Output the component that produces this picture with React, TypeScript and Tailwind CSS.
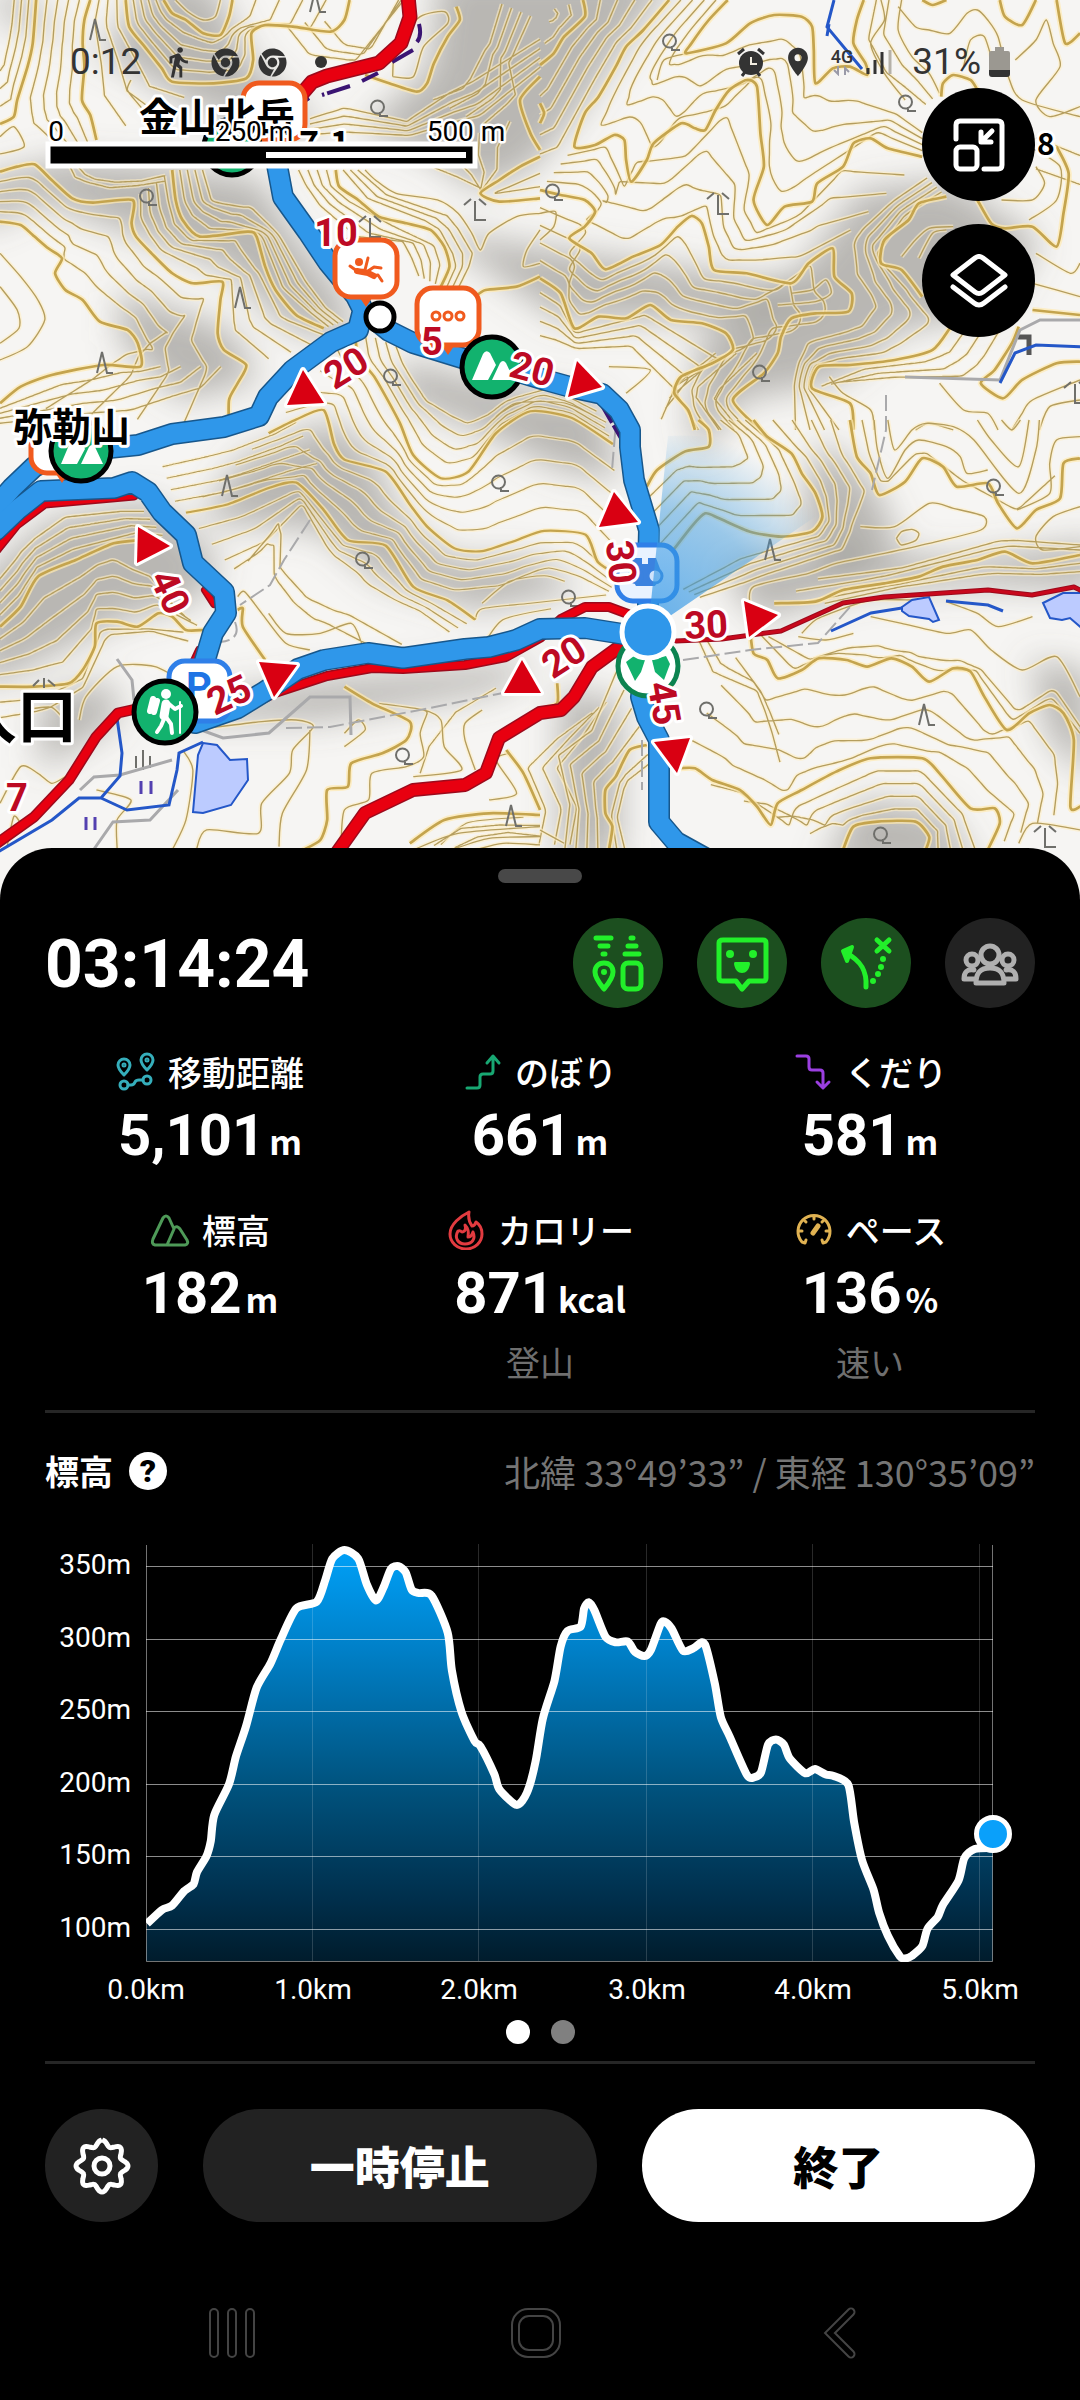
import type { ReactNode } from 'react';
import { FaChrome } from 'react-icons/fa';
import { MdDirectionsWalk, MdLocationOn } from 'react-icons/md';

type Point = [number, number];

const JP = 'font-["Noto_Sans_CJK_JP",sans-serif]';
const ROBOTO = 'font-[Roboto,"Noto_Sans_CJK_JP",sans-serif]';

// ── Geometry helpers ──

function parse(s: string): Point[] {
    return s.trim().split(/\s+/).map(p => p.split(',').map(Number) as Point);
}

function smooth(pts: Point[], k = 6): string {
    let d = `M${pts[0][0]} ${pts[0][1]}`;
    for (let i = 0; i < pts.length - 1; i++) {
        const a = pts[Math.max(i - 1, 0)];
        const b = pts[i];
        const c = pts[i + 1];
        const e = pts[Math.min(i + 2, pts.length - 1)];
        d += `C${(b[0] + (c[0] - a[0]) / k).toFixed(1)} ${(b[1] + (c[1] - a[1]) / k).toFixed(1)} ${(c[0] - (e[0] - b[0]) / k).toFixed(1)} ${(c[1] - (e[1] - b[1]) / k).toFixed(1)} ${c[0].toFixed(1)} ${c[1].toFixed(1)}`;
    }
    return d;
}

function resample(pts: Point[], n: number): Point[] {
    const dist = [0];
    for (let i = 1; i < pts.length; i++) {
        dist.push(dist[i - 1] + Math.hypot(pts[i][0] - pts[i - 1][0], pts[i][1] - pts[i - 1][1]));
    }
    const total = dist[dist.length - 1];
    const out: Point[] = [];
    let j = 1;
    for (let i = 0; i <= n; i++) {
        const t = (total * i) / n;
        while (j < pts.length - 1 && dist[j] < t) j++;
        const f = (t - dist[j - 1]) / (dist[j] - dist[j - 1] || 1);
        out.push([
            pts[j - 1][0] + (pts[j][0] - pts[j - 1][0]) * f,
            pts[j - 1][1] + (pts[j][1] - pts[j - 1][1]) * f,
        ]);
    }
    return out;
}

// Intermediate contours between two index contours
function between(a: string, b: string, count: number): string[] {
    const p = resample(parse(a), 44);
    const q = resample(parse(b), 44);
    return Array.from({ length: count }, (_, i) => {
        const f = (i + 1) / (count + 1);
        return smooth(p.map((pt, k) => [pt[0] + (q[k][0] - pt[0]) * f, pt[1] + (q[k][1] - pt[1]) * f] as Point));
    });
}

// ── Map data ──

type Tile = { transform: string; major: string[]; minor: string[]; bands: [string, string, number][] };

const TILES: Tile[] = [
    {
        transform: 'scale(.3444 .3333)',
        major: [
            '105,0 95,130 80,200 50,300 40,350 0,372',
            '262,0 245,60 240,130 245,200 238,300 262,345 280,420',
            '365,0 375,80 420,140 470,205 500,245 620,250 715,235 735,180 730,100 770,75 850,80 960,95 1000,60 1015,0',
            '475,0 500,40 540,60 590,100 640,105 665,50 675,0',
            '1325,20 1335,60 1300,110 1260,190 1240,250 1210,275 1130,250 1060,225',
            '0,515 50,500 100,493 150,540 210,595 270,608 385,600 382,670 395,710 440,760 500,820 560,850 645,845 640,900 632,1000 650,1050 715,1095 690,1150 665,1200 665,1290',
            '500,510 510,600 530,660 580,710 720,695 745,710 770,800 800,870 860,945 940,985',
            '0,665 60,675 95,705 140,745 180,775 160,820 190,870 240,900 290,965 370,990 400,1030 408,1100 300,1095 150,1125 60,1160 0,1210',
            '975,510 985,560 1040,600 1100,650 1180,670 1250,690 1290,740 1305,800 1280,860',
            '1568,470 1510,500 1450,540 1395,580 1450,605 1568,595',
            '1568,830 1500,860 1410,870 1380,890',
            '1568,230 1510,300 1540,400 1568,450',
        ],
        minor: [
            '0,410 40,380 70,440 0,462', '380,240 370,270 400,310 450,370', '510,0 545,35 590,60 625,50 640,0',
            '0,760 60,830 110,900 130,960 80,1040 0,1080', '0,860 50,930 55,985 0,1030',
            '1568,640 1500,650 1420,700 1395,750 1370,700 1330,640 1270,600 1150,580 1090,540 1060,510',
            '1568,690 1530,750 1520,800 1568,790',
            '1568,520 1480,560 1440,580 1568,560',
            '1140,230 1150,130 1220,50 1290,35 1300,70 1230,140 1200,230 1140,230',
        ],
        bands: [
            ['20,0 10,100 0,160', '105,0 95,130 80,200 50,300 40,350 0,372', 3],
            ['105,0 95,130 80,200 50,300 60,380 150,450', '262,0 245,60 240,130 245,200 238,300 262,345 280,420', 4],
            ['262,0 245,60 245,200 238,300 280,420', '365,0 375,80 420,140 500,245 620,250', 3],
            ['365,0 375,80 420,140 500,245 620,250 715,235 735,180 730,100 770,75 850,80 960,95 1015,0', '475,0 500,40 540,60 590,100 640,105 665,50 675,0', 4],
            ['1000,60 1050,120 1100,130 1150,0', '770,75 850,180 1010,200 1180,0', 3],
            ['900,340 1000,300 1180,350 1300,250 1568,90', '900,420 1200,420 1400,380 1568,230', 4],
            ['1210,275 1300,250 1400,120 1430,0', '1450,400 1540,300 1500,200 1568,60', 4],
            ['0,515 50,500 100,493 150,540 210,595 385,600 382,670 440,760 560,850 645,845 632,1000 715,1095 665,1290', '0,665 60,675 140,745 180,775 160,820 240,900 370,990 408,1100 300,1095 0,1210', 4],
            ['385,600 382,670 440,760 560,850 645,845 632,1000 715,1095', '500,510 530,660 580,710 720,695 770,800 860,945 1040,1000', 4],
            ['500,510 510,600 530,660 580,710 720,695 745,710 800,870 940,985', '610,510 640,600 760,600 860,760 960,920 1010,960', 4],
            ['180,500 190,540 300,580 480,560', '250,500 300,530 420,530 480,510', 2],
            ['975,510 985,560 1040,600 1180,670 1290,740 1305,800 1280,860', '840,510 900,620 1000,720 1140,720 1200,820', 4],
            ['1060,510 1150,580 1330,640 1400,760 1350,860', '975,510 1040,600 1250,690 1305,800 1280,860', 3],
            ['1130,500 1200,530 1290,540 1395,560', '1568,330 1500,420 1480,500 1395,580', 4],
            ['408,1100 300,1095 150,1125 0,1210', '700,1100 640,1180 420,1260 0,1285', 4],
        ],
    },
    {
        transform: 'translate(540 0) scale(.3444 .3333)',
        major: [
            '125,0 130,50 70,110 40,160 0,195',
            '375,0 300,90 250,140 220,200 170,290 130,340 100,440 160,435 215,405 245,420 250,480 265,545 310,480 330,430 410,370 450,385 480,390 510,330 550,270 600,240 630,260 640,400 650,500 620,600 660,675 710,620 790,605 805,550 880,500 910,430 960,415 1010,445 1110,470',
            '545,0 490,60 440,130 425,160 540,130 610,70 680,45 760,50 790,80 795,150 800,250 850,205 900,200 950,225 945,190 910,130 920,60 940,0',
            '0,570 60,585 130,600 160,635 130,680 85,715 150,760 190,808 270,770 350,735 400,680 440,648 470,670 490,740 505,810 600,820 730,850 780,790 850,745 855,830 905,880 895,935 800,940 730,955 700,1010 690,1060 650,1120 560,1200 640,1290',
            '0,835 60,880 100,985 170,950 250,955 320,915 380,960 470,970 540,1000 560,1050 500,1090 410,1130 390,1180 430,1230 450,1290',
            '1335,0 1350,50 1400,75 1440,0', '1500,0 1525,130 1568,100',
            '1165,290 1170,250 1200,225 1250,240 1270,270',
            '1180,590 1100,610 1070,660 1000,720 990,790 1050,810 1110,890',
            '1270,600 1310,670 1350,685 1430,680 1500,740 1520,640 1535,520 1500,440',
            '1430,930 1568,945',
            '1390,980 1370,1030 1320,1110 1280,1150 1345,1195 1400,1140 1500,1090 1568,1085',
            '1190,985 1140,1050 1030,1080 900,1095 810,1100 790,1165 900,1210 910,1290',
            '1110,0 1140,15 1180,0', '0,310 12,340 0,370',
        ],
        minor: [
            '990,0 1000,60 960,130 1000,220 1060,300', '1050,0 1040,90 1080,170 1130,220 1160,280',
            '1040,20 1090,80 1130,90 1190,100 1240,40 1270,30 1300,60 1330,110 1360,230 1400,300 1568,350',
            '1380,180 1440,120 1470,60 1490,130 1510,200 1440,300 1480,350 1568,320', '1230,200 1250,120 1290,110 1320,210',
            '840,1130 880,1180 960,1230 970,1290', '1160,1150 1230,1230 1300,1240 1330,1290', '1450,1290 1480,1220 1568,1200',
            '1370,1290 1400,1240 1430,1200 1568,1140', '730,880 790,870 830,840 845,880 800,905 690,915',
            '1050,770 1090,720 1130,685 1200,680', '1100,775 1140,700 1180,690', '1440,500 1465,550 1430,600 1340,600',
            '0,640 45,635 40,680 0,720', '340,240 360,180 430,160', '250,1180 320,1110 200,1100',
            '1420,440 1510,500 1500,600 1420,660', '1440,760 1540,820 1568,790', '1430,850 1568,890', '1090,1290 1130,1270 1200,1290',
        ],
        bands: [
            ['0,40 30,30 40,0', '125,0 130,50 70,110 40,160 0,195', 2],
            ['125,0 130,50 70,110 0,230', '375,0 300,90 250,140 170,290 60,500 0,520', 4],
            ['545,0 440,130 425,160 610,70 760,50 795,150 800,250 850,205 950,225 1110,380', '375,0 250,140 100,440 215,405 265,545 330,430 480,390 600,240 640,400 620,600 660,675 805,550 960,415 1110,470', 4],
            ['100,440 215,405 265,545 330,430 480,390 600,240 650,500 620,600 660,675 790,605 910,430 1110,470', '0,570 130,600 160,635 85,715 190,808 350,735 440,648 505,810 730,850 850,745', 4],
            ['0,570 160,635 85,715 190,808 350,735 440,648 505,810 600,820 730,850 850,745 855,830 905,880 895,935 730,955 690,1060 560,1200 640,1290', '0,835 60,880 100,985 170,950 320,915 380,960 540,1000 560,1050 410,1130 390,1180 450,1290', 4],
            ['1110,520 1000,600 880,700 870,800 930,900 900,960 750,1010 700,1290', '1180,590 1070,660 990,790 1110,890 1190,985 1030,1080 810,1100 790,1165 910,1290', 4],
            ['0,835 60,880 100,985 320,915 560,1050 400,1130', '0,1050 90,1060 250,1070 350,1200 340,1290', 4],
            ['940,0 910,130 960,240 1100,330', '1050,0 1040,90 1130,220 1160,280', 2],
            ['1190,985 1140,1050 900,1095 790,1165', '1390,980 1320,1110 1280,1150 900,1140', 3],
            ['690,1060 560,1200 640,1290', '450,1060 330,1150 400,1290', 3],
            ['1440,320 1568,380', '1440,600 1568,640', 2],
        ],
    },
    {
        // central basin between the two ridges
        transform: 'scale(.6888 .5484)',
        major: [
            '515,600 520,650 545,690 580,770 600,830 640,872 680,860 720,790 770,750 830,762 890,810',
            '390,790 430,765 470,748 485,810 500,838 560,860 595,920 620,960 660,1000 700,1005 750,985 790,968 850,975 868,1025 900,1050',
            '270,935 330,920 390,890 430,880 470,930 505,985 560,995 600,1070 650,1095 690,1130',
        ],
        minor: [
            '720,760 750,735 820,735 880,770', '690,1130 700,1110 770,1100 880,1085', '820,1060 790,1050 740,1060 700,1100',
            '700,1180 730,1130 800,1110', '640,1540 680,1500 760,1490',
        ],
        bands: [
            ['590,640 610,690 630,725 690,750 740,712 800,700 860,735', '515,600 520,650 545,690 580,770 600,830 640,872 680,860 720,790 770,750 830,762 890,810', 4],
            ['515,600 520,650 545,690 580,770 600,830 640,872 680,860 720,790 770,750 830,762 890,810', '390,790 430,765 470,748 485,810 500,838 560,860 595,920 620,960 660,1000 700,1005 750,985 790,968 850,975 900,1050', 4],
            ['390,790 470,748 485,810 500,838 560,860 620,960 660,1000 700,1005 790,968 850,975 900,1050', '270,935 330,920 430,880 505,985 560,995 600,1070 650,1095 720,1090 780,1050 830,1060 880,1085', 4],
            ['230,830 330,800 390,770 420,745', '260,935 330,920 430,880 470,870', 4],
            ['345,1050 400,1010 440,930 470,1010 520,1080 600,1120 640,1160', '270,935 330,920 430,880 505,985 560,995 600,1070 690,1130', 3],
            ['560,1400 570,1350 620,1300 680,1250', '660,1420 700,1300 760,1260', 1],
            ['890,1270 865,1340 830,1400 860,1470 850,1540', '850,1310 790,1350 745,1400 770,1480 760,1540', 3],
        ],
    },
    {
        transform: 'translate(0 420) scale(.3444 .3333)',
        major: [
            '0,620 60,560 110,470 220,420 330,370 410,360',
            '0,800 100,800 200,790 240,750 275,680 280,610 340,605 400,620 460,580 500,590 540,630 590,630',
            '690,570 705,565 705,620 770,720',
            '1000,800 1080,850 1190,905 1180,960 1110,1000 1020,1030 1010,1100 950,1110 950,1200 930,1260 880,1290',
            '1470,990 1520,1060 1568,1170', '1190,1270 1290,1200 1420,1180 1568,1185',
        ],
        minor: [
            '230,900 250,830 340,740 450,740 540,790', '530,990 560,1050 540,1200 500,1290',
            '600,925 760,905 860,900 910,920 850,990 840,1060 760,1150 750,1240 600,1230 570,1290',
            '1230,870 1240,880 1220,940 1230,1010 1180,1040 1080,1060 1070,1140 1000,1170 990,1290',
            '1400,870 1350,910 1350,960 1380,1050', '780,580 830,640 930,640 1020,610 1050,670',
            '690,530 710,515 760,580 830,670 900,690', '0,1150 60,1040 110,1060 150,1090 190,1070',
            '900,930 890,1050 820,1180 810,1280', '1000,940 1040,900 1060,930 1000,980', '100,865 150,862 180,890', '100,940 150,930',
            '20,1284 40,1190 60,1210', '340,1284 340,1200 380,1140 280,1110', '1480,1000 1440,1020 1500,1120 1420,1140', '1200,1290 1330,1240 1568,1220', '1310,1290 1420,1255 1568,1250', '1380,1290 1460,1270 1568,1275',
            '1100,850 1230,870 1280,900 1290,980 1340,1050 1200,1070', '550,830 700,840 880,800',
        ],
        bands: [
            ['0,440 60,360 180,260 400,250', '0,620 60,560 110,470 220,420 410,360 490,370', 4],
            ['0,620 60,560 110,470 220,420 330,370 430,440 500,560', '0,800 100,800 200,790 275,680 280,610 400,620 460,580 590,630', 4],
            ['0,800 100,800 240,750 280,610 400,620 520,610', '0,940 150,900 240,830 330,660 450,640 560,690', 2],
            ['640,470 720,450 775,410 780,500 850,620 1000,690', '760,400 840,250 830,420 930,520 1080,560 1250,665', 2],
            ['1380,1290 1500,1260 1568,1280', '1200,1270 1290,1200 1568,1185', 2],
        ],
    },
    {
        transform: 'translate(540 420) scale(.3444 .3333)',
        major: [
            '310,200 340,150 420,95 490,80 490,30 460,0',
            '620,0 660,50 730,100 760,160 800,220 820,290 790,335 700,350 610,335 520,295 480,280 440,320 350,440',
            '680,550 800,545 880,510 1000,490 1100,470 1170,440 1270,420 1350,395 1430,430 1568,405',
            '900,0 920,110 960,160 985,225 1060,185 1110,115 1170,140 1210,200 1300,190 1330,250 1385,325 1440,270 1510,235 1520,130 1568,115',
            '610,630 620,700 660,720 690,775 760,750 810,715 890,720 950,740 1020,715 1080,740 1130,785 1200,745 1250,755 1290,830 1355,930 1420,880 1480,855 1520,880 1550,960 1540,1160 1568,1160',
            '310,975 260,990 220,1070 190,1110 190,1180 210,1220 200,1290',
            '400,1045 450,1045 500,1080 580,1110 630,1160 670,1215 690,1150 760,1110 860,1055 960,1015 1110,1015 1160,1060 1250,1165 1320,1165 1335,1210 1300,1290',
            '880,1290 910,1220 980,1205 1090,1205 1130,1250 1120,1290', '50,790 50,850 0,870',
        ],
        minor: [
            '930,320 1030,320 1130,250 1200,265 1290,290 1280,330 1130,370 1000,400 860,430 780,460 620,500 610,560',
            '970,0 980,90 1010,175 1060,90 1100,60 1180,80 1220,110 1240,160 1300,150', '1010,0 1030,90 1080,30 1120,10 1200,20 1260,60 1390,220 1440,90 1450,0',
            '1340,0 1370,30 1395,0', '1270,0 1310,60 1390,140 1420,0', '1568,260 1490,290 1440,350 1460,390 1568,380', '1568,50 1500,60 1480,130 1480,220 1385,270',
            '1035,355 1050,335 1080,328 1100,340 1090,362 1050,375 1035,355',
            '760,640 800,600 870,570 960,540 1080,540', '1180,545 1270,580 1330,620 1430,590', '750,650 830,660 910,640',
            '960,590 1050,610 1180,640 1250,630 1310,690 1400,750 1500,710 1568,830', '1390,1270 1430,1210 1568,1230', '0,1230 70,1270',
        ],
        bands: [
            ['310,180 400,95 560,90 540,30 500,0', '340,440 480,280 610,335 790,335 820,290 730,100 620,0', 4],
            ['620,0 730,100 800,220 820,290 790,335 560,400 400,500', '900,0 920,110 985,225 930,320 900,400 620,500 480,540', 4],
            ['610,630 690,775 810,715 950,740 1020,715 1130,785 1250,755 1355,930 1480,855 1550,960 1540,1160', '400,1045 500,1080 670,1215 690,1150 960,1015 1110,1015 1250,1165 1335,1210 1300,1290', 4],
            ['690,660 830,690 1020,650 1130,700 1240,690 1400,850 1500,780 1568,900', '610,630 690,775 810,715 950,740 1020,715 1130,785 1250,755 1355,930 1480,855 1568,960', 2],
            ['400,1045 500,1080 670,1215 690,1150 960,1015 1110,1015 1250,1165 1300,1290', '880,1290 910,1220 980,1205 1090,1205 1130,1250 1120,1290', 4],
            ['200,700 130,900 20,980 60,1140 40,1290', '310,975 220,1070 190,1110 190,1180 200,1290', 4],
            ['430,640 480,780 640,840 680,1000 700,1110', '500,650 560,720 640,780 690,860', 2],
            ['310,975 220,1070 190,1180 200,1290', '320,1060 260,1100 240,1200 270,1290', 2],
            ['900,0 920,110 985,225 1110,115 1210,200 1385,325 1510,235', '970,0 1010,175 1100,60 1240,160 1385,220 1480,100', 1],
            ['870,440 1100,420 1350,340 1568,360', '680,550 880,510 1170,440 1350,395 1568,405', 2],
            ['680,550 1000,490 1270,420 1430,430 1568,405', '900,550 1100,500 1300,480 1568,480', 2],
        ],
    },
];

const MAJOR = TILES.map(t => t.major.map(s => smooth(parse(s), 9)).join(''));
const MINOR = TILES.map(t => [
    ...t.minor.map(s => smooth(parse(s), 8)),
    ...t.bands.flatMap(([a, b, n]) => between(a, b, n)),
].join(''));

const BLUE_ROUTES = [
    'M272 150L277 165L283 197L308 232L328 262L356 296L363 310L358 330L331 342L293 370L268 397L259 416L224 427L172 434L138 445L60 453L34 467L12 488L-4 506',
    'M-4 530L17 510L41 491L114 488L132 482L148 492L162 512L186 535L193 563L224 592L226 613L213 633L205 660L198 700',
    'M195 723L238 708L264 692L298 669L324 660L368 653L403 658L465 649L489 647L516 640L540 629L585 628L623 634L648 633',
    'M378 322L389 331L413 343L465 359L492 364L545 380L574 388L602 394L619 410L630 430L630 447L634 480L649 530L648 570L648 633L641 697L647 717L659 740L659 822L676 842L705 858',
];

const RED_ROUTES = [
    { d: 'M408 -4L410 17L401 43L379 63L327 76L312 82L300 96', w: 15 },
    { d: 'M136 709L118 713L96 737L69 780L34 817L-4 844', w: 11 },
    { d: 'M-4 551L17 525L45 504L134 496', w: 9 },
    { d: 'M205 590L214 604M199 650L192 665M376 324L413 347L460 362', w: 8 },
    { d: 'M236 712L275 693L327 676L372 668L403 669L465 665L506 657L540 638L561 619L585 607L609 607L628 614', w: 10 },
    { d: 'M618 648L592 667L574 697L561 710L540 713L499 738L486 773L465 785L413 790L365 813L333 858', w: 14 },
    { d: 'M676 641L722 639L781 631L843 603L884 597L988 590L1032 595L1074 587L1084 592', w: 5 },
];

const STREAMS = 'M834 0L827 27L862 69M827 36L829 24M1000 383L1015 353L1036 345L1084 347M831 631L871 613L902 608M946 601L988 605L1003 611M117 718L122 753L120 776L101 798L79 798L52 820L-4 853M101 798L127 810L169 805L177 770L179 753L203 742';

const PONDS = [
    'M203 743L217 745L230 760L247 759L248 780L231 805L203 813L193 812L198 755Z',
    'M902 607L912 600L929 597L939 620L933 622L929 619L909 616L902 611Z',
    'M1043 603L1063 593L1084 593L1084 630L1070 618L1062 620L1050 618Z',
];

const TRIANGLES = [
    '303,370 324,403 287,405', '577,361 602,387 568,397', '138,527 170,546 137,563', '259,662 297,665 274,697',
    '522,660 541,693 504,693', '614,492 638,522 599,527', '744,601 778,615 749,637', '654,742 690,738 677,773',
];

const TIMES = [
    { x: 336, y: 233, r: 0, t: '10' }, { x: 346, y: 368, r: -32, t: '20' }, { x: 432, y: 342, r: 0, t: '5' },
    { x: 532, y: 369, r: 15, t: '20' }, { x: 170, y: 592, r: 65, t: '40' }, { x: 229, y: 695, r: -25, t: '25' },
    { x: 564, y: 657, r: -33, t: '20' }, { x: 621, y: 562, r: 84, t: '30' }, { x: 706, y: 625, r: -3, t: '30' },
    { x: 664, y: 703, r: 80, t: '45' }, { x: 17, y: 798, r: 0, t: '7' },
];

const BROADLEAF: Point[] = [[378, 108], [147, 197], [391, 377], [670, 42], [906, 103], [553, 192], [760, 373], [363, 560], [499, 483], [403, 756], [569, 598], [707, 710], [994, 487], [881, 835]];
const CONIFER: Point[] = [[242, 298], [104, 363], [97, 30], [317, 2], [229, 486], [513, 816], [772, 550], [926, 715]];
const BAMBOO: Point[] = [[475, 210], [370, 227], [718, 204], [1075, 393], [1045, 837]];

const SHADES = [
    'M440 -30L680 -30L620 50L580 110L530 170L480 190L420 150L360 130L430 70Z',
    'M0 20L80 40L200 110L330 140L250 60L210 -20L150 -20L100 60L0 -20Z',
    'M-20 180L60 160L150 165L260 180L290 230L340 290L360 340L290 330L230 270L150 240L40 200L-20 230Z',
    'M120 290L230 330L260 380L180 400L120 340Z',
    'M690 420L700 340L800 270L860 190L950 180L1040 240L1000 310L900 330L840 380L740 400L700 460Z',
    'M400 360L500 385L600 400L620 480L560 470L480 430L400 400Z',
    'M240 460L330 420L370 450L400 520L450 560L540 560L580 590L480 610L380 580L320 530L200 520Z',
    'M-20 580L50 520L150 500L220 560L200 600L120 620L-20 690Z',
    'M720 570L820 545L960 560L1100 540L1100 590L980 585L860 590L760 620Z',
    'M820 440L870 480L900 540L840 570L800 520Z',
    'M180 700L330 680L540 660L500 690L320 720L180 720Z',
    'M40 700L110 680L120 720L40 770Z',
    'M860 800L940 810L980 870L820 870Z',
    'M1030 660L1090 670L1090 780L1050 740Z',
    'M560 250L700 270L820 290L740 320L560 320L430 230Z',
    'M560 690L620 700L620 860L560 860Z',
];

function HazardPin({ x, y, children }: { x: number; y: number; children?: ReactNode }) {
    return (
        <g transform={`translate(${x} ${y})`}>
            <path d="M-8 27L0 39L8 27Z" fill="#f05a1e" />
            <rect x="-31" y="-28" width="62" height="57" rx="16" fill="#fff" stroke="#f05a1e" strokeWidth="5" />
            {children}
        </g>
    );
}

function SummitPin({ x, y, r = 28 }: { x: number; y: number; r?: number }) {
    return (
        <g transform={`translate(${x} ${y})`}>
            <circle r={r} fill="#12b26e" stroke="#000" strokeWidth="5" />
            <path d="M-20 13L-9 -13Q-6 -18 -2 -14L4 -2L-4 13ZM0 13L8 -4Q11 -8 14 -4L22 13Z" fill="#fff" />
        </g>
    );
}

function RouteMap() {
    return (
        <svg viewBox="0 0 1080 900" preserveAspectRatio="xMidYMin slice" className="block w-full h-auto bg-[#f6f5f3]" role="img" aria-label="地図">
            <defs>
                <filter id="relief" x="-10%" y="-10%" width="120%" height="120%">
                    <feGaussianBlur stdDeviation="17" />
                </filter>
                <radialGradient id="heading" gradientUnits="userSpaceOnUse" cx="648" cy="631" r="205">
                    <stop offset="0" stopColor="#2f96e8" stopOpacity=".75" />
                    <stop offset=".6" stopColor="#3f9ce0" stopOpacity=".5" />
                    <stop offset="1" stopColor="#3f9ce0" stopOpacity="0" />
                </radialGradient>
            </defs>

            <g fill="#706d66" fillOpacity=".46" filter="url(#relief)">
                {SHADES.map(d => <path key={d} d={d} />)}
            </g>

            {TILES.map((t, i) => {
                const wide = t.transform.startsWith('scale(.6888');
                return (
                    <g key={t.transform} transform={t.transform} fill="none" strokeLinejoin="round">
                        <path d={MINOR[i]} stroke="#ffefc4" strokeOpacity=".6" strokeWidth={wide ? 7 : 13} />
                        <path d={MINOR[i]} stroke="#b59e5e" strokeWidth={wide ? 2 : 4} />
                        <path d={MAJOR[i]} stroke="#ffe9b0" strokeOpacity=".7" strokeWidth={wide ? 9 : 18} />
                        <path d={MAJOR[i]} stroke="#c4a44e" strokeWidth={wide ? 4 : 8} />
                    </g>
                );
            })}

            {/* Vegetation marks */}
            <g fill="none" stroke="#6f6f6b" strokeWidth="2">
                {BROADLEAF.map(([x, y]) => <path key={`${x}-${y}`} d={`M${x - 7} ${y - 1}a6.500 6.500 0 1 0 13 0a6.500 6.500 0 1 0 -13 0M${x + 2} ${y + 4}V${y + 8}H${x + 10}`} />)}
                {CONIFER.map(([x, y]) => <path key={`${x}-${y}`} d={`M${x - 7} ${y + 10}L${x - 2} ${y - 11}L${x + 3} ${y + 10}H${x + 9}`} />)}
                {BAMBOO.map(([x, y]) => <path key={`${x}-${y}`} d={`M${x - 11} ${y - 5}L${x - 4} ${y - 11}M${x + 11} ${y - 5}L${x + 4} ${y - 11}M${x} ${y - 9}V${y + 10}H${x + 11}`} />)}
                <path d="M136 756V768M143 750V770M150 756V768M33 686L39 680M44 678V688M48 680L55 686" />
            </g>
            <path d="M141 781V794M151 781V794M86 817V830M95 817V830" stroke="#5340b0" strokeWidth="3" />
            <path d="M1018 337H1029V355" fill="none" stroke="#555" strokeWidth="5" />

            {/* Tracks and water */}
            <g fill="none" stroke="#a9a9ab" strokeWidth="3">
                <path d="M117 659L132 680L134 700M193 727L223 738L269 733L310 697L350 697L351 735M80 790L94 777L120 775L172 760M92 852L113 822L150 820L178 790M1080 320H1040L1020 330L1000 380L905 377" />
                <path d="M286 728L330 727L430 708L503 693M683 660L750 650L818 643L850 607M310 520L284 560L270 585L240 605M235 622Q242 640 220 642M642 740V790M617 410L612 470M886 395V430L872 490" strokeWidth="2" strokeDasharray="16 5" />
            </g>
            <path d={STREAMS} fill="none" stroke="#2457c8" strokeWidth="3" />
            {PONDS.map(d => <path key={d} d={d} fill="#bccbff" stroke="#2457c8" strokeWidth="2" />)}
            <path d="M419 24Q422 36 417 42M413 50L392 62M378 73L362 81M350 86L322 95M309 98L306 100M600 402L622 440" fill="none" stroke="#3a1473" strokeWidth="4" strokeDasharray="24 3" />

            {/* Trails */}
            <g fill="none" strokeLinejoin="round" strokeLinecap="round">
                {RED_ROUTES.map(r => (
                    <g key={r.d}>
                        <path d={r.d} stroke="#9c0a1c" strokeWidth={r.w} />
                        <path d={r.d} stroke={r.w < 6 ? '#c8081c' : '#e80010'} strokeWidth={Math.max(r.w - 3, 3)} />
                    </g>
                ))}
                {BLUE_ROUTES.map(d => <path key={d} d={d} stroke="#17578c" strokeWidth="22" />)}
                {BLUE_ROUTES.map(d => <path key={d} d={d} stroke="#2f97ea" strokeWidth="19" />)}
            </g>

            <HazardPin x={274} y={111} />
            <SummitPin x={232} y={147} />
            <HazardPin x={366} y={268}>
                <g fill="none" stroke="#f05a1e" strokeLinecap="round" strokeLinejoin="round">
                    <circle cx="-7" cy="-6" r="4" fill="#f05a1e" stroke="none" />
                    <path d="M-9 3L2 5L8 8" strokeWidth="6" />
                    <path d="M-16 -2L-9 3L-1 2L2 -10M2 3L8 -1L15 0M7 8L12 7L16 13" strokeWidth="3" />
                </g>
            </HazardPin>
            <HazardPin x={448} y={316}>
                <g fill="none" stroke="#f05a1e" strokeWidth="3">
                    <circle cx="-12" r="4" /><circle r="4" /><circle cx="12" r="4" />
                </g>
            </HazardPin>
            <circle cx="380" cy="317" r="14" fill="#fff" stroke="#000" strokeWidth="5" />
            <SummitPin x={492} y={367} r={30} />
            <HazardPin x={62} y={444} />
            <SummitPin x={81} y={451} r={30} />

            {/* Parking and trailhead */}
            <rect x="169" y="661" width="61" height="60" rx="16" fill="#fff" stroke="#2f7fe8" strokeWidth="5" />
            <text x="199" y="701" textAnchor="middle" className="font-[Roboto,sans-serif] font-bold text-[40px]" fill="#1f74e4">P</text>
            <circle cx="165" cy="712" r="31" fill="#12b26e" stroke="#000" strokeWidth="5" />
            <g fill="none" stroke="#fff" strokeLinecap="round" strokeLinejoin="round">
                <circle cx="166" cy="694" r="5" fill="#fff" stroke="none" />
                <path d="M153 699L150 711M157 701L154 712" strokeWidth="6" />
                <path d="M166 704L164 716" strokeWidth="9" />
                <path d="M164 719L161 726L157 732M166 717L171 724L172 733M169 704L175 709L181 706" strokeWidth="4" />
                <path d="M180 702V733" strokeWidth="2" />
            </g>

            {/* Current position */}
            <circle cx="648" cy="666" r="30" fill="#fff" stroke="#0c8350" strokeWidth="5" />
            <path d="M626 662L634 656L645 660L641 672L635 681ZM652 660L666 656L670 664L664 680L655 672Z" fill="#12b26e" />
            <rect x="617" y="545" width="60" height="56" rx="16" fill="#e8f2ff" stroke="#2f7fe8" strokeWidth="5" />
            <g fill="#3b82df">
                <path d="M633 558H642V564H648V558H656L662 574L655 586H636L629 574Z" />
                <circle cx="636" cy="576" r="8" />
            </g>
            <circle cx="655" cy="576" r="7" fill="#cfe3fb" stroke="#3b82df" strokeWidth="3" />
            <path d="M648 631L668 436Q770 430 828 508Z" fill="url(#heading)" />
            <circle cx="648" cy="632" r="26" fill="#2f97ea" stroke="#fff" strokeWidth="5" />

            {TRIANGLES.map(p => <polygon key={p} points={p} fill="#d90012" stroke="#fff" strokeWidth="6" strokeLinejoin="round" paintOrder="stroke" />)}
            <g fill="#bd0a24" stroke="#fff" strokeWidth="6" strokeLinejoin="round" paintOrder="stroke" textAnchor="middle" className="font-[Roboto,sans-serif] font-bold text-[38px]">
                {TIMES.map(n => <text key={`${n.x}-${n.y}`} transform={`translate(${n.x} ${n.y}) rotate(${n.r})`} y="13">{n.t}</text>)}
            </g>
            <g fill="#000" stroke="#fff" strokeWidth="6" strokeLinejoin="round" paintOrder="stroke" className='font-["Noto_Sans_CJK_JP",sans-serif] font-bold'>
                <text x="139" y="131" className="text-[39px]">金山北岳</text>
                <text x="299" y="156" className="text-[34px]">7.1</text>
                <text x="13" y="441" className="text-[39px]">弥勒山</text>
                <text x="77" y="738" textAnchor="end" className="text-[60px]">入口</text>
                <text x="1037" y="155" className="text-[30px]">8</text>
            </g>

            {/* Scale bar */}
            <rect x="48" y="144" width="427" height="22" fill="#000" stroke="#fff" strokeWidth="5" />
            <rect x="266" y="152" width="200" height="6" fill="#fff" />
            <g fill="#000" stroke="#fff" strokeWidth="5" strokeLinejoin="round" paintOrder="stroke" textAnchor="middle" className="font-[Roboto,sans-serif] text-[28px]">
                <text x="56" y="141">0</text>
                <text x="254" y="141">250 m</text>
                <text x="466" y="141">500 m</text>
            </g>
        </svg>
    );
}

// ── Status bar ──

function StatusBar() {
    return (
        <div className={`absolute inset-x-0 top-0 flex items-center justify-between h-[124px] px-[70px] text-[#333] ${ROBOTO}`}>
            <div className="flex items-center">
                <span className="text-[37px] leading-[40px]">0:12</span>
                <MdDirectionsWalk className="w-[34px] h-[34px] ml-5" />
                <FaChrome className="w-[29px] h-[29px] ml-4" />
                <FaChrome className="w-[29px] h-[29px] ml-[18px]" />
                <span className="w-3 h-3 ml-7 rounded-full bg-[#333]" />
            </div>
            <div className="flex items-center">
                <svg viewBox="0 0 28 30" className="w-7 h-[30px]" aria-hidden="true">
                    <circle cx="14" cy="16" r="12" fill="currentColor" />
                    <path d="M1 7L7 2M27 7L21 2M5 29L8 25M23 29L20 25" stroke="currentColor" strokeWidth="3" />
                    <path d="M14 10V17H20" fill="none" stroke="#f1ece0" strokeWidth="2" />
                </svg>
                <MdLocationOn className="w-[34px] h-[34px] ml-4" />
                <div className="flex flex-col items-center ml-4">
                    <span className="text-[18px] leading-[18px] font-medium">4G</span>
                    <svg viewBox="0 0 20 10" className="w-5 h-[10px]" aria-hidden="true">
                        <path d="M6 0V8L2 4M13 9V2L17 6" fill="none" stroke="#9a9aa8" strokeWidth="2" />
                    </svg>
                </div>
                <svg viewBox="0 0 30 24" className="w-[30px] h-6 ml-[13px]" aria-hidden="true">
                    <path d="M2 18V24M9 10V24M16 2V24" stroke="currentColor" strokeWidth="3" />
                    <path d="M24 0V24" stroke="#b5b1a8" strokeWidth="3" />
                </svg>
                <span className="text-[37px] leading-[40px] ml-4">31%</span>
                <svg viewBox="0 0 21 30" className="w-[21px] h-[30px] ml-2" aria-hidden="true">
                    <path d="M6 0H15V4H19Q21 4 21 6V23H0V6Q0 4 2 4H6Z" fill="#9b9891" />
                    <path d="M0 23H21V27Q21 30 18 30H3Q0 30 0 27Z" fill="currentColor" />
                </svg>
            </div>
        </div>
    );
}

function MapButton({ label, children }: { label: string; children: ReactNode }) {
    return (
        <button type="button" aria-label={label} className="flex items-center justify-center w-[113px] h-[113px] rounded-full bg-black text-white">
            {children}
        </button>
    );
}

// ── Round toggles ──

function Toggle({ label, active, children }: { label: string; active?: boolean; children: ReactNode }) {
    return (
        <button type="button" aria-label={label} aria-pressed={!!active} className={`w-[90px] h-[90px] rounded-full ${active ? 'bg-[#1c4f1f] text-[#22f02a]' : 'bg-[#222] text-[#b0b0b0]'}`}>
            <svg viewBox="0 0 90 90" className="w-full h-full" fill="none" stroke="currentColor" strokeWidth="5" strokeLinecap="round" strokeLinejoin="round" aria-hidden="true">
                {children}
            </svg>
        </button>
    );
}

function Toggles() {
    return (
        <div className="flex gap-[34px]">
            <Toggle label="ランドマーク" active>
                <path d="M23 20H38M27 28H35M30 36H32M58 20H60M55 28H63M52 36H66" />
                <path d="M31 45C25 45 22 49 22 54C22 60 27 66 31 71C35 66 40 60 40 54C40 49 37 45 31 45Z" />
                <circle cx="31" cy="54" r="3" fill="currentColor" stroke="none" />
                <rect x="50" y="45" width="18" height="26" rx="5" />
            </Toggle>
            <Toggle label="フィールドメモ" active>
                <path d="M26 22H66Q69 22 69 25V60Q69 63 66 63H52L45 71L39 63H26Q22 63 22 60V25Q22 22 26 22Z" />
                <circle cx="33" cy="36" r="4" fill="currentColor" stroke="none" />
                <circle cx="56" cy="36" r="4" fill="currentColor" stroke="none" />
                <path d="M38 44H52Q53 44 53 46C52 52 49 55 45 55S38 52 37 46Q37 44 38 44Z" fill="currentColor" stroke="none" />
            </Toggle>
            <Toggle label="ルート外れ警告" active>
                <path d="M45 69C46 54 41 43 25 35" />
                <path d="M31 29L22 33L26 43Z" fill="currentColor" strokeWidth="4" />
                <path d="M56 22L68 33M68 22L56 33" />
                <path d="M62 41V41.100M60 49V49.100M57 56V56.100M52 63V63.100" strokeWidth="6" />
            </Toggle>
            <Toggle label="グループ">
                <circle cx="45" cy="37" r="9" />
                <path d="M31 65C31 55 35 50 45 50S59 55 59 65Z" />
                <circle cx="27" cy="42" r="6" />
                <circle cx="63" cy="42" r="6" />
                <path d="M29 52C22 51 19 54 19 61H29M61 52C68 51 71 54 71 61H61" />
            </Toggle>
        </div>
    );
}

// ── Stats ──

function StatIcon({ color, children }: { color: string; children: ReactNode }) {
    return (
        <svg viewBox="0 0 40 40" className="w-10 h-10 shrink-0" fill="none" stroke={color} strokeWidth="3" strokeLinecap="round" strokeLinejoin="round" aria-hidden="true">
            {children}
        </svg>
    );
}

const STATS: { label: string; value: string; unit: string; note?: string; icon: ReactNode }[] = [
    {
        label: '移動距離', value: '5,101', unit: 'm',
        icon: (
            <StatIcon color="#35aebb">
                <path d="M8 23C4 19 2 16 2 13A6 6 0 0 1 14 13C14 16 12 19 8 23ZM31 18C27 14 25 11 25 8A6 6 0 0 1 37 8C37 11 35 14 31 18Z" />
                <circle cx="8" cy="13" r="1" /><circle cx="31" cy="8" r="1" />
                <circle cx="8" cy="33" r="4" /><circle cx="31" cy="28" r="4" />
                <path d="M12 33H15Q18 33 19 30Q20 28 23 28H27" />
            </StatIcon>
        ),
    },
    {
        label: 'のぼり', value: '661', unit: 'm',
        icon: <StatIcon color="#18a873"><path d="M4 36H14Q17 36 17 33V25Q17 22 20 22H27Q30 22 30 19V5M24 11L30 4L36 11" /></StatIcon>,
    },
    {
        label: 'くだり', value: '581', unit: 'm',
        icon: <StatIcon color="#9b3fe0"><path d="M4 4H13Q16 4 16 7V15Q16 18 19 18H27Q30 18 30 21V35M24 30L30 36L36 30" /></StatIcon>,
    },
    {
        label: '標高', value: '182', unit: 'm',
        icon: (
            <StatIcon color="#4e9a58">
                <path d="M19 35H5Q1 34 3 29L13 8Q16 4 19 8L24 19L17 35M24 18Q27 15 30 19L37 30Q39 34 35 35H17" />
            </StatIcon>
        ),
    },
    {
        label: 'カロリー', value: '871', unit: 'kcal', note: '登山',
        icon: (
            <StatIcon color="#e23b40">
                <path d="M23 2C15 6 4 14 4 24A16 15 0 0 0 36 24C36 18 33 14 30 12C29 15 28 16 26 16C23 12 22 8 23 2Z" />
                <path d="M19 15C21 21 17 22 16 22C15 21 14 20 12 21C8 28 12 34 19 34S30 29 27 22C25 27 24 27 22 27C23 22 22 18 19 15Z" />
            </StatIcon>
        ),
    },
    {
        label: 'ペース', value: '136', unit: '%', note: '速い',
        icon: (
            <StatIcon color="#e0b252">
                <path d="M11 33L8 32A16 16 0 1 1 32 32L29 33L28 30M12 30L11 33M20 6V9M11 11L12 12M29 11L28 12M5 21H8M35 21H32" />
                <path d="M19 23L24 16" strokeWidth="5" />
            </StatIcon>
        ),
    },
];

function Stat({ stat }: { stat: (typeof STATS)[number] }) {
    return (
        <div className="flex flex-col items-center">
            <div className="flex items-center gap-3 h-12">
                {stat.icon}
                <span className={`text-[34px] leading-[46px] font-medium ${JP}`}>{stat.label}</span>
            </div>
            <div className="flex items-baseline gap-1 h-[60px] mt-2 font-bold">
                <span className={`text-[58px] leading-[62px] ${ROBOTO}`}>{stat.value}</span>
                <span className={`text-[34px] leading-[48px] ${JP}`}>{stat.unit}</span>
            </div>
            {stat.note && <div className={`mt-[18px] text-[34px] leading-[44px] text-[#6f6f6f] ${JP}`}>{stat.note}</div>}
        </div>
    );
}

// ── Elevation chart ──

const PROFILE = parse(`427,1175 470,1135 500,1122 535,1080 562,1060 572,1025 600,978 612,935 622,860 665,770 685,690 715,600 745,490 785,420 815,350
    860,260 920,240 945,175 965,115 1000,90 1040,115 1065,190 1092,237 1115,195 1135,145 1157,137 1178,155 1195,205 1215,215 1253,222 1300,330
    1312,440 1340,560 1378,645 1395,660 1435,740 1450,785 1500,830 1530,795 1555,705 1576,580 1610,470 1628,370 1648,325 1686,312 1696,260
    1710,242 1726,265 1758,342 1788,358 1823,356 1843,385 1871,398 1890,380 1918,305 1930,298 1950,318 1983,382 2013,375 2038,358 2050,372
    2076,480 2093,575 2118,630 2168,742 2190,750 2210,735 2230,655 2253,640 2276,655 2293,695 2338,738 2366,726 2398,742 2420,746 2463,772
    2480,880 2503,990 2536,1075 2553,1145 2578,1210 2613,1270 2628,1276 2648,1268 2678,1240 2693,1190 2723,1155 2738,1120 2783,1050
    2800,985 2830,958 2882,955`).map(([x, y]) => [x * 0.3444 - 45, y * 0.3444 - 16] as Point);

const ALTITUDES = [350, 300, 250, 200, 150, 100];
const DISTANCES = ['0.0km', '1.0km', '2.0km', '3.0km', '4.0km', '5.0km'];
const ROW_Y = [31, 104, 176, 249, 321, 394];
const COL_X = [101, 268, 434, 602, 768, 935];

function ElevationChart() {
    const line = smooth(PROFILE, 8);
    return (
        <svg viewBox="0 0 990 474" className="block w-full h-auto mt-10" role="img" aria-label="標高グラフ">
            <defs>
                <linearGradient id="slope" x1="0" y1="10" x2="0" y2="426" gradientUnits="userSpaceOnUse">
                    <stop offset="0" stopColor="#00a2fa" />
                    <stop offset=".25" stopColor="#0080c8" />
                    <stop offset=".57" stopColor="#005480" />
                    <stop offset=".85" stopColor="#002f4c" />
                    <stop offset="1" stopColor="#001c2c" />
                </linearGradient>
                <clipPath id="plot"><rect x="101" y="0" width="847" height="427" /></clipPath>
            </defs>
            <path d={`${line}V426H101Z`} fill="url(#slope)" />
            <g stroke="#fff" strokeWidth="1">
                {ROW_Y.map(y => <path key={y} d={`M101 ${y + 0.5}H948`} strokeOpacity=".55" />)}
                {COL_X.slice(1).map(x => <path key={x} d={`M${x - 0.5} 9V426`} strokeOpacity=".16" />)}
                <path d="M101.500 10V426.500H947.500V10" fill="none" strokeOpacity=".45" />
            </g>
            <path d={line} clipPath="url(#plot)" fill="none" stroke="#fff" strokeWidth="8" strokeLinejoin="round" />
            <circle cx="948" cy="299" r="16.500" fill="#0aa0fa" stroke="#fff" strokeWidth="5" />
            <g fill="#fff" className="font-[Roboto,sans-serif] text-[28px]">
                {ALTITUDES.map((a, i) => <text key={a} x="86" y={ROW_Y[i] + 8} textAnchor="end">{a}m</text>)}
                {DISTANCES.map((d, i) => <text key={d} x={COL_X[i]} y="464" textAnchor="middle">{d}</text>)}
            </g>
        </svg>
    );
}

const COG = smooth(Array.from({ length: 65 }, (_, i) => {
    const a = (i / 64) * Math.PI * 2;
    const r = 23 + 3 * Math.cos(8 * a);
    return [30 + r * Math.sin(a), 30 - r * Math.cos(a)] as Point;
}));

export default function App() {
    return (
        <main className={`min-h-screen bg-black text-white ${JP}`}>
            <section className="relative">
                <RouteMap />
                <StatusBar />
                <div className="absolute top-[88px] right-[45px] flex flex-col gap-[23px]">
                    <MapButton label="縮小表示">
                        <svg viewBox="0 0 54 54" className="w-[54px] h-[54px]" fill="none" stroke="currentColor" strokeWidth="5" strokeLinecap="round" strokeLinejoin="round" aria-hidden="true">
                            <path d="M4 21V7Q4 3 8 3H46Q50 3 50 7V47Q50 51 46 51H32" />
                            <rect x="4" y="29" width="21" height="22" rx="4" />
                            <path d="M40 13L30 23M29 14V24H39" />
                        </svg>
                    </MapButton>
                    <MapButton label="レイヤー">
                        <svg viewBox="0 0 58 54" className="w-[58px] h-[54px]" fill="none" stroke="currentColor" strokeWidth="5" strokeLinecap="round" strokeLinejoin="round" aria-hidden="true">
                            <path d="M25 4Q29 1 33 4L55 21L33 38Q29 41 25 38L3 21Z" />
                            <path d="M3 33L24 49Q29 53 34 49L55 33" />
                        </svg>
                    </MapButton>
                </div>
            </section>

            <section className="relative -mt-[52px] px-[45px] pt-[21px] rounded-t-[52px] bg-black">
                <div className="w-[84px] h-[14px] mx-auto rounded-full bg-[#484848]" />

                <div className="flex items-center justify-between h-[90px] mt-[35px]">
                    <h1 className={`pt-1 text-[66px] leading-[80px] font-bold ${ROBOTO}`}>03:14:24</h1>
                    <Toggles />
                </div>

                <div className="grid grid-cols-3 gap-y-[42px] mt-10">
                    {STATS.map(s => <Stat key={s.label} stat={s} />)}
                </div>

                <hr className="mt-[26px] border-0 h-[3px] bg-[#262626]" />

                <div className="flex items-center justify-between h-12 mt-[34px]">
                    <div className="flex items-center gap-4">
                        <h2 className="text-[34px] leading-[46px] font-bold">標高</h2>
                        <button type="button" aria-label="標高について" className={`w-[38px] h-[38px] rounded-full bg-white text-black text-[32px] leading-[38px] font-black text-center ${ROBOTO}`}>?</button>
                    </div>
                    <p className="text-[36px] leading-[46px] text-[#757575]">北緯 33°49’33” / 東経 130°35’09”</p>
                </div>

                <ElevationChart />

                <div className="flex justify-center gap-[21px] mt-[11px]">
                    <span className="w-6 h-6 rounded-full bg-white" />
                    <span className="w-6 h-6 rounded-full bg-[#808080]" />
                </div>

                <hr className="mt-[17px] border-0 h-[3px] bg-[#262626]" />

                <div className="flex gap-[45px] mt-[45px] h-[113px]">
                    <button type="button" aria-label="設定" className="flex items-center justify-center shrink-0 w-[113px] rounded-full bg-[#222]">
                        <svg viewBox="0 0 60 60" className="w-[60px] h-[60px]" fill="none" stroke="currentColor" strokeWidth="5" strokeLinejoin="round" aria-hidden="true">
                            <path d={COG} />
                            <circle cx="30" cy="30" r="8" />
                        </svg>
                    </button>
                    <button type="button" className="flex-1 rounded-full bg-[#222] text-[45px] font-black">一時停止</button>
                    <button type="button" className="flex-1 rounded-full bg-white text-black text-[45px] font-black">終了</button>
                </div>
            </section>

            <nav className="grid grid-cols-3 justify-items-center pl-[80px] pr-[88px] pt-[85px] pb-[40px]">
                <button type="button" aria-label="履歴">
                    <svg viewBox="0 0 50 52" className="w-[50px] h-[52px]" fill="none" stroke="#444" strokeWidth="2" aria-hidden="true">
                        <rect x="3" y="2" width="8" height="48" rx="4" />
                        <rect x="21" y="2" width="8" height="48" rx="4" />
                        <rect x="39" y="2" width="8" height="48" rx="4" />
                    </svg>
                </button>
                <button type="button" aria-label="ホーム">
                    <svg viewBox="0 0 52 52" className="w-[52px] h-[52px]" fill="none" stroke="#444" strokeWidth="2" aria-hidden="true">
                        <rect x="2" y="2" width="48" height="48" rx="16" />
                        <rect x="9" y="9" width="34" height="34" rx="10" />
                    </svg>
                </button>
                <button type="button" aria-label="戻る">
                    <svg viewBox="0 0 34 52" className="w-[34px] h-[52px]" fill="none" strokeLinecap="round" aria-hidden="true">
                        <path d="M28 5L7 26L28 47" stroke="#444" strokeWidth="9" />
                        <path d="M28 5L7 26L28 47" stroke="#000" strokeWidth="5" />
                    </svg>
                </button>
            </nav>
        </main>
    );
}
